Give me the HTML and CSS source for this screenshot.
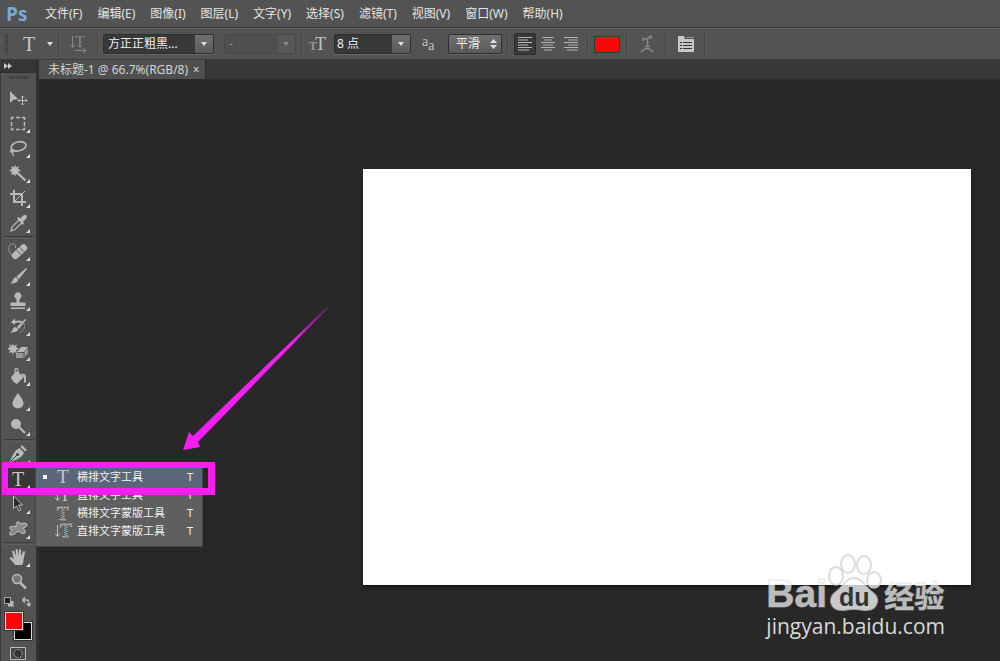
FILE: index.html
```html
<!DOCTYPE html>
<html lang="zh-CN">
<head>
    <meta charset="UTF-8">
    <meta name="viewport" content="width=device-width, initial-scale=1.0">
    <title>未标题-1 @ 66.7%(RGB/8)</title>
    <link rel="stylesheet" href="styles.css">
</head>
<body>
    <nav class="menubar">
        <span class="logo">Ps</span>
        <button>文件(F)</button>
        <button>编辑(E)</button>
        <button>图像(I)</button>
        <button>图层(L)</button>
        <button>文字(Y)</button>
        <button>选择(S)</button>
        <button>滤镜(T)</button>
        <button>视图(V)</button>
        <button>窗口(W)</button>
        <button>帮助(H)</button>
    </nav>

    <div class="options">
        <span class="grip"></span>
        <button class="preset" aria-label="文字工具预设"><span class="serif">T</span><span class="caret"></span></button>
        <span class="sep"></span>
        <button class="icon-btn dim" aria-label="切换文本取向">
            <svg width="18" height="18" viewBox="0 0 18 18">
                <text x="5" y="12" class="svg-t" font-size="16">T</text>
                <path d="M2.5 1v11M0 9.5l2.5 3 2.5-3M5 15.5h11M13 13l3 2.5-3 2.5" fill="none" stroke="currentColor"/>
            </svg>
        </button>
        <span class="sep"></span>
        <span class="combo family">
            <select aria-label="字体"><option>方正正粗黑...</option></select>
        </span>
        <span class="combo style disabled">
            <select aria-label="字体样式" disabled><option>-</option></select>
        </span>
        <span class="sep wide"></span>
        <label class="size-icon" for="size" aria-label="字体大小"><span class="small">T</span><span class="big">T</span></label>
        <span class="combo size">
            <select id="size"><option>8 点</option></select>
        </span>
        <label class="aa-icon" for="smooth" aria-label="消除锯齿"><span>a</span><span class="low">a</span></label>
        <span class="combo smooth">
            <select id="smooth"><option>平滑</option></select>
            <svg width="7" height="10" viewBox="0 0 7 10"><path d="M0 4l3.5-4L7 4zM0 6h7l-3.5 4z" fill="#ddd"/></svg>
        </span>
        <span class="sep wide"></span>
        <div class="aligns">
            <button class="active" aria-label="左对齐">
                <svg width="14" height="14" viewBox="0 0 14 14"><path d="M0 .5h14M0 3h10M0 5.5h14M0 8h10M0 10.5h14M0 13h11"/></svg>
            </button>
            <button aria-label="居中对齐">
                <svg width="14" height="14" viewBox="0 0 14 14"><path d="M1 .5h12M3 3h8M0 5.5h14M2 8h10M0 10.5h14M3 13h8"/></svg>
            </button>
            <button aria-label="右对齐">
                <svg width="14" height="14" viewBox="0 0 14 14"><path d="M0 .5h14M4 3h10M0 5.5h14M4 8h10M0 10.5h14M3 13h11"/></svg>
            </button>
        </div>
        <span class="sep wide"></span>
        <button class="swatch" aria-label="文本颜色"></button>
        <span class="sep"></span>
        <button class="icon-btn dim" aria-label="文字变形">
            <svg width="14" height="18" viewBox="0 0 14 18">
                <path d="M3 6V3.5Q7 5 11 1v3M7.5 3v8M5 11.5h5" fill="none" stroke="currentColor" stroke-width="1.5"/>
                <path d="M1 17q6-7 12 0" fill="none" stroke="currentColor" stroke-width="1.5"/>
            </svg>
        </button>
        <span class="sep"></span>
        <button class="icon-btn" aria-label="字符和段落面板">
            <svg width="16" height="16" viewBox="0 0 16 16">
                <path d="M0 0h6l1 3h9v13H0z" fill="#c6c6c6"/>
                <path d="M8 1.5h8" stroke="#999"/>
                <path d="M2 6.5h2M5 6.5h9M2 9.5h2M5 9.5h9M2 12.5h2M5 12.5h9" stroke="#333"/>
            </svg>
        </button>
        <span class="sep"></span>
    </div>

    <main class="workspace">
        <aside class="toolbox">
            <div class="collapse">
                <svg width="8" height="6" viewBox="0 0 8 6"><path d="M0 0l4 3-4 3zM4 0l4 3-4 3z" fill="#c8c8c8"/></svg>
            </div>
            <div class="handle"></div>
            <ul class="tools">
                <li><button aria-label="移动工具"><svg viewBox="0 0 20 20">
                    <path class="f" d="M2 3v12l3-3 5-1z"/>
                    <path class="s" d="M10 12.500h9M14.500 8v9M13 9.500L14.500 8 16 9.500M13 15.500l1.500 1.500 1.500-1.500M11.500 11L10 12.500l1.500 1.500M17.500 11l1.500 1.500-1.500 1.500"/>
                </svg></button></li>
                <li class="more"><button aria-label="矩形选框工具"><svg viewBox="0 0 20 20">
                    <path class="s" stroke-width="1.5" d="M3.500 7V4.500H6M8 4.500h4M14 4.500h2.500V7M16.500 9v4M16.500 14.500v2H14M12 16.500H8M6 16.500H3.500v-2M3.500 13V9"/>
                </svg></button></li>
                <li class="more"><button aria-label="套索工具"><svg viewBox="0 0 20 20">
                    <ellipse class="s" cx="10.500" cy="8.500" rx="7.500" ry="4.500" stroke-width="1.700" transform="rotate(-12 10 8)"/>
                    <path class="s" stroke-width="1.300" d="M4 11c-3 2-1 4 1 3s0-3-1-1 3 3 1 5"/>
                </svg></button></li>
                <li class="more"><button aria-label="魔棒工具"><svg viewBox="0 0 20 20">
                    <path class="f" d="M7 1.500l1 3 3-1.500-1 3 3 1.500-3 1.500 1 3-3-1-1 3-1-3-3 1 1-3-3-1.500L4 6 3 3l3 1.500z"/>
                    <circle class="f" cx="7" cy="7.500" r="3.500"/>
                    <path class="s" stroke-width="2.200" d="M10 10.500l7.500 7"/>
                </svg></button></li>
                <li class="more"><button aria-label="裁剪工具"><svg viewBox="0 0 20 20">
                    <path class="s" stroke-width="2" d="M6 2v12h12M2 6h12v12"/>
                    <path class="s" d="M7 13L17 3"/>
                </svg></button></li>
                <li class="more"><button aria-label="吸管工具"><svg viewBox="0 0 20 20">
                    <path class="s" stroke-width="1.300" d="M11 7L4 14l-1 4 4-1.500 7-7"/>
                    <path class="f" d="M9 5l1.500-1 2 1.500 2.500-3q2.500-1.500 3.500 0t-.5 3.500l-3 2.500 1 2-1.500 1.500z"/>
                </svg></button></li>
                <li class="rule"></li>
                <li class="more"><button aria-label="污点修复画笔工具"><svg viewBox="0 0 20 20">
                    <path class="s" stroke-dasharray="1.500 1" d="M5 15C-1 11 0 3 4 3s4 2 3 5"/>
                    <rect class="f" x="2" y="7" width="18" height="7" rx="3" transform="rotate(-43 11.500 10)"/>
                    <path d="M8 8.500l6 6M11 5.500l6 6M10.500 11l1 1M12.500 9l1 1" stroke="#666" fill="none"/>
                </svg></button></li>
                <li class="more"><button aria-label="画笔工具"><svg viewBox="0 0 20 20">
                    <path class="f" d="M18 2l1 1-8 10-2.500-2.500zM8 11l2.500 2.500Q9 18 2 17.500q2.500-1 3-4 1-2.500 3-2.500z"/>
                </svg></button></li>
                <li class="more"><button aria-label="仿制图章工具"><svg viewBox="0 0 20 20">
                    <path class="f" d="M8.500 8a3.500 3.500 0 1 1 3 0v3.500h5q1 0 1 1V15H2.500v-2.500q0-1 1-1h5zM3 16.500h14V18H3z"/>
                </svg></button></li>
                <li class="more"><button aria-label="历史记录画笔工具"><svg viewBox="0 0 20 20">
                    <path class="f" d="M17 3l1 1-7 9-2-2zM8 11l2.500 2.500Q8 17 2 16.500q3-2 3-4 1-1.500 3-1.500zM3 6l4-3.500V5q4-1 7 0l-1 2q-3-1-6 0v2z"/>
                    <path class="s" stroke-dasharray="1.500 1.500" d="M16 8q2 6-5 9"/>
                </svg></button></li>
                <li class="more"><button aria-label="魔术橡皮擦工具"><svg viewBox="0 0 20 20">
                    <path class="f" d="M5 2l1 3 3-2-1 3 3 2-3 1 1 3-3-1-1 3-1-3-3 1 1-3-3-1 3-2-1-3 3 2z"/>
                    <path class="f" d="M13 6h7l-4 5H9z"/>
                    <path d="M8 12h7.500v5H8zM16.500 11.500L20 7v5l-3.500 4.500z" fill="#999"/>
                </svg></button></li>
                <li class="more"><button aria-label="油漆桶工具"><svg viewBox="0 0 20 20">
                    <path class="f" d="M3 11l6-6 7 6-7 7q-5-2-6-7z"/>
                    <path class="s" stroke-width="1.300" d="M7 10V4q1-3 3 0v6"/>
                    <path class="f" d="M13 8q5-1 5 3v5q-2 2-2-1v-4z"/>
                </svg></button></li>
                <li class="more"><button aria-label="模糊工具"><svg viewBox="0 0 20 20">
                    <path class="f" d="M10 2q5.500 7 5.500 10.500a5.500 5 0 0 1-11 0Q4.500 9 10 2z"/>
                </svg></button></li>
                <li class="more"><button aria-label="减淡工具"><svg viewBox="0 0 20 20">
                    <circle class="f" cx="8" cy="8" r="5"/>
                    <path class="s" stroke-width="2.200" d="M11 11l6 6"/>
                </svg></button></li>
                <li class="rule"></li>
                <li class="more"><button aria-label="钢笔工具"><svg viewBox="0 0 20 20">
                    <path class="f" d="M14 1l5 5-2 1.500L12.500 3zM11.500 4L16 8.500Q15 14 2 18 5 7 11.500 4z"/>
                    <path d="M3 17l6-6" stroke="#444"/><circle cx="9.500" cy="10.500" r="1.500" fill="#444"/>
                </svg></button></li>
                <li class="more selected">
                    <button aria-label="横排文字工具"><span class="serif">T</span></button>
                    <ul class="flyout">
                        <li class="current"><button><svg viewBox="0 0 20 18">
                            <text x="2" y="15" font-size="19">T</text>
                        </svg>横排文字工具<kbd>T</kbd></button></li>
                        <li><button><svg viewBox="0 0 20 18">
                            <path d="M2.500 4v10M0 11.500l2.500 3 2.500-3"/>
                            <text x="5" y="15" font-size="16">T</text>
                        </svg>直排文字工具<kbd>T</kbd></button></li>
                        <li><button><svg viewBox="0 0 20 18">
                            <text x="2" y="16" font-size="19" class="mask">T</text>
                        </svg>横排文字蒙版工具<kbd>T</kbd></button></li>
                        <li><button><svg viewBox="0 0 20 18">
                            <path d="M2.500 3v11M0 11.500l2.500 3 2.500-3"/>
                            <text x="5" y="15" font-size="19" class="mask">T</text>
                        </svg>直排文字蒙版工具<kbd>T</kbd></button></li>
                    </ul>
                    <div class="highlight"></div>
                </li>
                <li class="more"><button aria-label="路径选择工具"><svg viewBox="0 0 20 20">
                    <path d="M5.500 2v12.500l3-2.500 2.500 5 2-1-2.500-5h4z" fill="#2c2c2c" stroke="#b8b8b8"/>
                </svg></button></li>
                <li class="more"><button aria-label="自定形状工具"><svg viewBox="0 0 20 20">
                    <path d="M9 3q3-1 3 2 5-2 7 0 1 3-4 4 3 2 2 5-3 2-7-2-4 5-8 4-1-3 2-5-3-1-2-3 3-2 6 0 0-4 1-5z" fill="#888" stroke="#bbb"/>
                </svg></button></li>
                <li class="rule"></li>
                <li class="more"><button aria-label="抓手工具"><svg viewBox="0 0 20 20">
                    <path class="f" d="M7 18q-1-2-5-6-1-2 1-2l3 2L4 5q0-2 2-1l2 5-.5-6q1-2 2.300 0L10.500 9 11 3q1-2 2.200 0L13 9.500l2-5q2-1 2 1L15.500 13q0 3-1.500 5z"/>
                </svg></button></li>
                <li><button aria-label="缩放工具"><svg viewBox="0 0 20 20">
                    <circle cx="9" cy="7" r="4.500" fill="#777" stroke="#bbb" stroke-width="1.500"/>
                    <path class="s" stroke-width="2.500" d="M12 10.500l6 6"/>
                </svg></button></li>
            </ul>
            <div class="color-actions">
                <button aria-label="默认前景色和背景色"><svg width="10" height="10" viewBox="0 0 10 10">
                    <path d="M4 4h5.500v5.500H4z" fill="#bbb"/><path d="M.5.5h6v6h-6z" fill="#222" stroke="#aaa"/>
                </svg></button>
                <button aria-label="切换前景色和背景色"><svg width="10" height="10" viewBox="0 0 10 10">
                    <path d="M2 3h4q2 0 2 5M4 .5L1.500 3 4 5.500M5.500 6.500L8 9l2-2.500" fill="none" stroke="#bbb" stroke-width="1.300"/>
                </svg></button>
            </div>
            <div class="colors">
                <button class="background" aria-label="背景色"></button>
                <button class="foreground" aria-label="前景色"></button>
            </div>
            <button class="quickmask" aria-label="快速蒙版"><svg width="16" height="13" viewBox="0 0 16 13">
                <path d="M.5.5h15v12H.5z" fill="#484848" stroke="#bbb"/>
                <circle cx="8" cy="6.500" r="4" fill="#333" stroke="#bbb" stroke-dasharray="1.500 1"/>
            </svg></button>
        </aside>

        <section class="document">
            <div class="tabs">
                <div class="tab"><span>未标题-1 @ 66.7%(RGB/8)</span><button aria-label="关闭">×</button></div>
            </div>
            <div class="stage">
                <div class="canvas"></div>
            </div>
        </section>
    </main>

    <svg class="arrow" width="146" height="146" viewBox="0 0 146 146">
        <defs>
            <linearGradient id="fade" x1="0" y1="1" x2="1" y2="0">
                <stop offset="0.75" stop-color="#f51ef5"/>
                <stop offset="1" stop-color="#f51ef5" stop-opacity="0.25"/>
            </linearGradient>
        </defs>
        <path d="M0 145l6-18 4 4L144 2l1 1L15 137l2 5z" fill="url(#fade)"/>
    </svg>

    <div class="watermark">
        <div class="brand">
            <span class="bai">Bai</span>
            <svg width="52" height="60" viewBox="0 0 52 60">
                <g class="paw">
                    <ellipse cx="18" cy="12" rx="7" ry="9"/>
                    <ellipse cx="34" cy="13" rx="7" ry="9"/>
                    <ellipse cx="6" cy="24" rx="7" ry="9"/>
                    <ellipse cx="44" cy="28" rx="7" ry="8"/>
                    <path d="M24 26q6 0 11 7 4 5 8 8 5 4 4 9-2 9-13 8-10-2-20 0-11 1-13-8 0-7 5-10 4-3 7-7 5-7 11-7z"/>
                </g>
                <text x="9" y="54" class="du">du</text>
            </svg>
            <span class="jingyan">经验</span>
        </div>
        <div class="site">jingyan.baidu.com</div>
    </div>
</body>
</html>
```
FILE: styles.css
```css
* {
    box-sizing: border-box;
}
body {
    margin: 0;
    min-height: 100vh;
    display: flex;
    flex-direction: column;
    position: relative;
    overflow: hidden;
    background-color: #282828;
    color: #e4e4e4;
    font-family: "Noto Sans", "Noto Sans CJK SC", sans-serif;
    font-size: 12px;
}
button, select {
    font: inherit;
    color: inherit;
    background: none;
    border: 0;
    padding: 0;
    margin: 0;
}
ul {
    list-style: none;
    margin: 0;
    padding: 0;
}

/* menu bar */
.menubar {
    display: flex;
    align-items: center;
    height: 28px;
    background-color: #535353;
    border-bottom: 1px solid #383838;
}
.menubar .logo {
    width: 30px;
    margin-right: 8px;
    padding-left: 6px;
    font-family: "Open Sans", sans-serif;
    font-size: 19px;
    line-height: 24px;
    font-weight: bold;
    color: #7ba7d7;
}
.menubar button {
    padding: 0 8px 0 7px;
    line-height: 26px;
    white-space: nowrap;
}

/* options bar */
.options {
    display: flex;
    align-items: center;
    height: 32px;
    padding-left: 5px;
    background-color: #535353;
    border-top: 1px solid #666;
    border-bottom: 1px solid #3a3a3a;
}
.grip {
    width: 3px;
    height: 20px;
    background: repeating-linear-gradient(#383838 0 1px, #535353 1px 2px);
}
.sep {
    width: 2px;
    height: 22px;
    flex: none;
    background-color: #454545;
    border-right: 1px solid #5c5c5c;
}
.sep.wide {
    margin: 0 5px;
}
.serif {
    font-family: "Liberation Serif", serif;
    font-size: 20px;
    line-height: 20px;
    color: #c8c8c8;
}
.preset {
    display: flex;
    align-items: center;
    justify-content: space-between;
    width: 30px;
    margin: 0 5px 0 15px;
}
.caret {
    border: 3px solid transparent;
    border-top: 4px solid #ddd;
    border-bottom: 0;
}
.icon-btn {
    display: flex;
    align-items: center;
    justify-content: center;
    width: 37px;
    height: 22px;
    color: #ccc;
}
.dim {
    color: #888;
}
.svg-t {
    font-family: "Liberation Serif", serif;
    fill: currentColor;
}
.combo {
    position: relative;
    height: 20px;
    border: 1px solid #2e2e2e;
    border-radius: 2px;
    background-color: #383838;
    box-shadow: 0 1px 0 #666;
}
.combo select {
    appearance: none;
    display: block;
    width: 100%;
    height: 18px;
    padding: 0 4px;
    line-height: 18px;
    color: #eee;
    opacity: 1;
}
.combo::before {
    content: "";
    position: absolute;
    top: 0;
    right: 0;
    width: 18px;
    height: 18px;
    background: linear-gradient(#707070, #5a5a5a);
}
.combo::after {
    content: "";
    position: absolute;
    top: 7px;
    right: 6px;
    border: 3px solid transparent;
    border-top: 4px solid #ddd;
    border-bottom: 0;
}
.combo.family {
    width: 111px;
    margin: 0 10px 0 4px;
}
.combo.style {
    width: 72px;
}
.combo.disabled {
    background-color: #4f4f4f;
    border-color: #474747;
    box-shadow: none;
}
.combo.disabled select {
    color: #999;
}
.combo.disabled::before {
    background: #575757;
}
.combo.disabled::after {
    border-top-color: #888;
}
.combo.size {
    width: 77px;
}
.combo.size select {
    padding: 0 2px;
}
.combo.smooth {
    width: 54px;
    background: linear-gradient(#707070, #5a5a5a);
}
.combo.smooth select {
    padding: 0 7px;
}
.combo.smooth::before, .combo.smooth::after {
    display: none;
}
.combo.smooth svg {
    position: absolute;
    top: 4px;
    right: 4px;
}
.size-icon, .aa-icon {
    display: flex;
    align-items: baseline;
    font-family: "Liberation Serif", serif;
    color: #c0c0c0;
}
.size-icon {
    width: 25px;
    margin-left: 1px;
}
.size-icon .small {
    font-size: 12px;
    font-weight: bold;
    color: #999;
}
.size-icon .big {
    margin-left: -2px;
    font-size: 18px;
    line-height: 20px;
}
.aa-icon {
    width: 26px;
    margin-left: 11px;
    font-size: 14px;
}
.aa-icon .low {
    padding-top: 4px;
    align-self: flex-end;
}
.aligns {
    display: flex;
    gap: 1px;
}
.aligns button {
    display: flex;
    align-items: center;
    justify-content: center;
    width: 22px;
    height: 22px;
    border: 1px solid transparent;
    border-radius: 2px;
}
.aligns .active {
    background-color: #393939;
    border-color: #2c2c2c;
}
.aligns path {
    stroke: #b5b5b5;
}
.swatch {
    width: 26px;
    height: 17px;
    margin-right: 6px;
    background-color: #fb0606;
    border: 1px solid #353535;
}

/* workspace */
.workspace {
    flex: 1;
    display: flex;
    background-color: #282828;
}
.toolbox {
    position: relative;
    z-index: 2;
    width: 39px;
    flex: none;
    padding-left: 1px;
    border-right: 3px solid #313131;
    background-color: #535353;
    border-left: 1px solid #383838;
}
.collapse {
    display: flex;
    align-items: center;
    height: 13px;
    margin-left: -1px;
    padding-left: 3px;
    background-color: #353535;
    border-bottom: 1px solid #2d2d2d;
}
.handle {
    width: 19px;
    height: 3px;
    margin: 3px 0 7px 8px;
    background: repeating-linear-gradient(90deg, #383838 0 1px, #535353 1px 2px);
}
.tools > li {
    position: relative;
    height: 25px;
}
.tools > li > button {
    display: block;
    width: 33px;
    height: 25px;
    padding: 2px 7px 3px 6px;
}
.tools svg {
    display: block;
    width: 20px;
    height: 20px;
}
.tools .f {
    fill: #b9b9b9;
}
.tools .s {
    fill: none;
    stroke: #b9b9b9;
}
.tools > .more::before {
    content: "";
    position: absolute;
    left: 24px;
    top: 18px;
    border: 2px solid transparent;
    border-right-color: #ddd;
    border-bottom-color: #ddd;
}
.tools > .rule {
    height: 3px;
    margin-right: 2px;
    margin-left: 2px;
    border-top: 1px solid #3a3a3a;
    border-bottom: 1px solid #5e5e5e;
}
.tools > .selected {
    background-color: #383838;
    z-index: 3;
}

/* text tool flyout */
.flyout {
    position: absolute;
    left: 33px;
    top: -4px;
    width: 168px;
    padding: 4px 0 6px;
    background-color: #5f5f5f;
    border: 1px solid #454545;
}
.flyout li {
    height: 18px;
}
.flyout button {
    display: flex;
    align-items: center;
    width: 100%;
    height: 18px;
    padding: 0 9px 0 19px;
    font-size: 11px;
    line-height: 18px;
    white-space: nowrap;
    color: #f2f2f2;
}
.flyout kbd {
    margin-left: auto;
    font-family: inherit;
}
.flyout svg {
    width: 20px;
    height: 18px;
    margin-right: 2px;
    font-family: "Liberation Serif", serif;
}
.flyout text {
    fill: #c8c8c8;
}
.flyout path {
    fill: none;
    stroke: #c0c0c0;
}
.flyout .mask {
    fill: none;
    stroke: #ccc;
    stroke-dasharray: 1 1;
}
.flyout .current {
    position: relative;
    background-color: #5a6679;
    box-shadow: 0 2px 0 #5a6679;
}
.flyout .current::before {
    content: "";
    position: absolute;
    left: 7px;
    top: 7px;
    width: 4px;
    height: 4px;
    background-color: #fff;
}
.highlight {
    position: absolute;
    left: 0;
    top: -5px;
    width: 213px;
    height: 33px;
    border: 6px solid #f51ef5;
    border-right-width: 7px;
    border-bottom-width: 7px;
    pointer-events: none;
}

/* colours */
.color-actions {
    display: flex;
    justify-content: space-between;
    height: 13px;
    margin: 0 5px 0 2px;
}
.color-actions svg {
    display: block;
}
.colors {
    position: relative;
    height: 28px;
    margin: 4px 0 7px 3px;
}
.colors button {
    position: absolute;
    width: 18px;
    height: 18px;
    border: 1px solid #ddd;
    outline: 1px solid #333;
}
.foreground {
    left: 0;
    top: 0;
    background-color: #fb0606;
}
.background {
    left: 9px;
    top: 10px;
    background-color: #000;
}
.quickmask {
    display: block;
    margin-left: 8px;
}
.quickmask svg {
    display: block;
}

/* document */
.document {
    flex: 1;
    display: flex;
    flex-direction: column;
    min-width: 0;
}
.tabs {
    display: flex;
    height: 20px;
    background-color: #383838;
    border-bottom: 1px solid #2d2d2d;
}
.tab {
    display: flex;
    align-items: center;
    gap: 3px;
    padding: 0 4px 0 9px;
    background-color: #4f4f4f;
    border-right: 1px solid #2d2d2d;
    line-height: 20px;
    white-space: nowrap;
    color: #d4d4d4;
}
.tab button {
    width: 10px;
    line-height: 18px;
}
.stage {
    flex: 1;
    display: flex;
    padding: 89px 29px 76px 324px;
}
.canvas {
    flex: 1;
    background-color: #fff;
    box-shadow: 0 2px 3px #151515;
}

/* annotation arrow */
.arrow {
    position: absolute;
    left: 183px;
    top: 305px;
    z-index: 4;
}

/* watermark */
.watermark {
    position: absolute;
    right: 55px;
    bottom: 21px;
    color: #cacaca;
}
.brand {
    display: flex;
    align-items: flex-end;
    justify-content: space-between;
    width: 178px;
    height: 60px;
}
.brand svg {
    overflow: visible;
}
.bai, .jingyan {
    font-weight: bold;
    color: rgba(255, 255, 255, 0.7);
    -webkit-text-stroke: 1px rgba(200, 200, 200, 0.5);
}
.bai {
    font-family: "Liberation Sans", sans-serif;
    font-size: 39px;
    line-height: 36px;
}
.paw {
    fill: rgba(255, 255, 255, 0.75);
    stroke: rgba(205, 205, 205, 0.7);
    stroke-width: 2px;
}
.du {
    font-family: "Liberation Sans", sans-serif;
    font-size: 25px;
    font-weight: bold;
    fill: #333;
}
.jingyan {
    font-family: "Noto Sans CJK SC", sans-serif;
    font-size: 30px;
    line-height: 36px;
}
.site {
    font-family: "Open Sans", sans-serif;
    font-size: 21px;
    line-height: 28px;
    color: #d8d8d8;
}
```
